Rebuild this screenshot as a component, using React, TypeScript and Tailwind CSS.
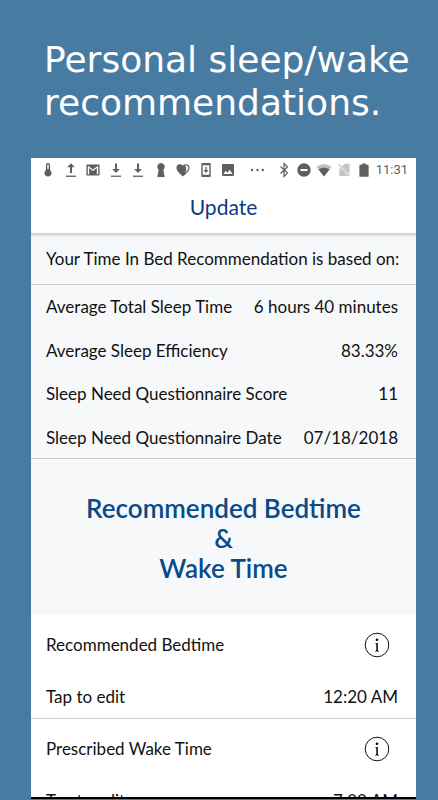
import type { ReactNode } from 'react';

interface Stat { label: string; value: string; }
interface TimeSetting { label: string; time: string; }

const stats: Stat[] = [
  { label: 'Average Total Sleep Time', value: '6 hours 40 minutes' },
  { label: 'Average Sleep Efficiency', value: '83.33%' },
  { label: 'Sleep Need Questionnaire Score', value: '11' },
  { label: 'Sleep Need Questionnaire Date', value: '07/18/2018' },
];

const settings: TimeSetting[] = [
  { label: 'Recommended Bedtime', time: '12:20 AM' },
  { label: 'Prescribed Wake Time', time: '7:00 AM' },
];

function Icon({ children }: { children: ReactNode }) {
  return (
    <svg viewBox="0 0 16 16" className="size-4 shrink-0" fill="currentColor" aria-hidden="true">
      {children}
    </svg>
  );
}

const Download = () => (
  <Icon>
    <path d="M7 1.500h2v5.500h2.800L8 11 4.200 7H7z" />
    <path d="M3 13.600h10v1.300H3z" />
  </Icon>
);

function StatusBar() {
  return (
    <div className="flex h-6 items-center justify-between bg-white pl-[9px] pr-2 text-[#5f5f5f]">
      <div className="flex w-[196px] items-center justify-between">
        {/* thermometer */}
        <Icon>
          <path d="M8 1a2.100 2.100 0 0 0-2.100 2.100v5.200a3.500 3.500 0 1 0 4.200 0V3.100A2.100 2.100 0 0 0 8 1zm-.7 2.100a.7.7 0 0 1 1.400 0v3.800H7.300z" />
        </Icon>
        {/* upload */}
        <Icon>
          <path d="M7 11V5.300H4.200L8 1.300l3.800 4H9V11z" />
          <path d="M3 13.600h10v1.300H3z" />
        </Icon>
        {/* mail */}
        <Icon>
          <path fillRule="evenodd" d="M2.400 2.500h11.200c.6 0 1 .4 1 1v9c0 .6-.4 1-1 1H2.400c-.6 0-1-.4-1-1v-9c0-.6.4-1 1-1zm1.800 9.800V6.100L8 9l3.800-2.900v6.200h1.400V4.200h-.8L8 7.400 3.600 4.200h-.8v8.100z" />
        </Icon>
        <Download />
        <Download />
        {/* keyhole */}
        <Icon>
          <path d="M8 1a3.800 3.800 0 0 0-2.300 6.800L4.300 15h7.400l-1.400-7.200A3.800 3.800 0 0 0 8 1z" />
        </Icon>
        {/* heart */}
        <Icon>
          <path fillRule="evenodd" d="M8 14.400C4.200 11.100 1.500 8.800 1.500 5.700A3.500 3.500 0 0 1 5 2.200c1.200 0 2.300.6 3 1.400.7-.8 1.800-1.400 3-1.400a3.500 3.500 0 0 1 3.500 3.500c0 3.100-2.700 5.400-6.500 8.700zm1.700-3.300c2.100-1.900 3.600-3.500 3.600-5.400A2.300 2.300 0 0 0 11 3.400c-.5 0-.9.1-1.200.3 1 .7 1.500 1.700 1.500 3 0 1.600-.6 3-1.600 4.400z" />
        </Icon>
        {/* system update */}
        <Icon>
          <path fillRule="evenodd" d="M4.400 1h7.200c.6 0 1.100.5 1.100 1.100v11.800c0 .6-.5 1.100-1.100 1.100H4.400c-.6 0-1.100-.5-1.100-1.100V2.100C3.300 1.500 3.800 1 4.400 1zM4.700 3.200v9.600h6.600V3.200zM7.300 5h1.400v3h1.900L8 10.900 5.400 8h1.900z" />
        </Icon>
        {/* picture */}
        <Icon>
          <path fillRule="evenodd" d="M3.200 2h9.600c.7 0 1.200.5 1.200 1.200v9.600c0 .7-.5 1.200-1.200 1.200H3.200c-.7 0-1.200-.5-1.200-1.200V3.200C2 2.500 2.500 2 3.200 2zm.3 9.900h9L9.600 7.700l-2.300 3-1.600-1.900z" />
        </Icon>
      </div>
      <Icon>
        <circle cx="4" cy="8" r="1.200" />
        <circle cx="9.500" cy="8" r="1.200" />
        <circle cx="14.800" cy="8" r="1.200" />
      </Icon>
      <div className="flex items-center gap-1">
        {/* bluetooth */}
        <Icon>
          <path d="M4.500 4.500 11.500 11 8 14.500v-13L11.500 5l-7 6.500" fill="none" stroke="currentColor" strokeWidth="1.200" />
        </Icon>
        {/* do not disturb */}
        <Icon>
          <path fillRule="evenodd" d="M8 1.300a6.700 6.700 0 1 1 0 13.400A6.700 6.700 0 0 1 8 1.300zM4.500 7.100v1.800h7V7.100z" />
        </Icon>
        {/* wifi */}
        <Icon>
          <path d="M8 14.500.5 5C4.500 1.200 11.500 1.200 15.500 5z" opacity=".4" />
          <path d="M8 14.500 2.500 7.500c3-2.500 8-2.500 11 0z" />
        </Icon>
        {/* no sim */}
        <Icon>
          <g className="text-[#c4c4c4]">
            <path d="M13.500 1.800v10.400L5.900 4.600 8.700 1.800zM4.300 5.800 12.500 14H3.400V6.500z" fill="currentColor" />
            <path d="m2.500 2 11.500 12.300" fill="none" stroke="currentColor" strokeWidth="1.200" />
          </g>
        </Icon>
        {/* battery */}
        <Icon>
          <path d="M6.200 1.500h3.600v1.300h2.400c.2 0 .4.200.4.400v11c0 .3-.2.500-.5.500H3.900c-.3 0-.5-.2-.5-.5v-11c0-.2.200-.4.400-.4h2.400z" />
        </Icon>
        <span className="font-['Roboto',sans-serif] text-[13px] leading-4">11:31</span>
      </div>
    </div>
  );
}

function InfoButton({ label }: { label: string }) {
  return (
    <button aria-label={`About ${label}`} className="mr-2 shrink-0">
      <svg viewBox="0 0 26 26" className="size-[26px]" aria-hidden="true">
        <circle cx="13" cy="13" r="11.800" fill="none" stroke="currentColor" strokeWidth="1" />
        <circle cx="13" cy="7.800" r="1.300" />
        <path d="M11.200 10.900h2.600v7.400c0 .5.400.7 1.200.8v.5h-4v-.5c.9-.1 1.300-.3 1.300-.8v-6c0-.5-.3-.8-1.100-.9z" />
      </svg>
    </button>
  );
}

function SettingRows({ label, time }: TimeSetting) {
  return (
    <div className="border-b border-[#cdced0]">
      <div className="flex h-[59px] items-center justify-between pl-[15px] pr-[18px]">
        <span>{label}</span>
        <InfoButton label={label} />
      </div>
      <div className="ml-5 border-t border-[#fafafb]" />
      <button className="flex h-[43px] w-full items-center justify-between pl-[15px] pr-[18px]">
        <span>Tap to edit</span>
        <span>{time}</span>
      </button>
    </div>
  );
}

export default function App() {
  return (
    <div className="flex h-screen flex-col overflow-hidden bg-[#487ba2] pb-px">
      <h1 className="pb-[34px] pl-11 pr-4 pt-[38px] font-['DejaVu_Sans',Verdana,sans-serif] text-[36px] leading-[43px] text-white">
        Personal sleep/wake recommendations.
      </h1>

      <main className="ml-[31px] mr-[22px] min-h-0 flex-1 overflow-hidden border-b-2 border-black bg-white font-['Lato',sans-serif] text-[17px] text-[#111]">
        <StatusBar />
        <header className="flex h-[52px] items-center justify-center pb-0.5 text-[21px] text-[#0b3b85]">
          <h2>Update</h2>
        </header>

        <section className="bg-[#f7f8fa] shadow-[0_-1px_0_#cfd0d2,inset_0_3px_3px_-2px_rgba(0,0,0,0.2)]">
          <p className="flex h-[51px] items-center whitespace-nowrap border-b border-[#c8cacd] pl-[15px]">
            Your Time In Bed Recommendation is based on:
          </p>
          <dl className="flex min-h-[174px] flex-col justify-between border-b border-[#c8cacd] pb-2 pt-[10px] leading-6">
            {stats.map((s) => (
              <div key={s.label} className="flex justify-between whitespace-nowrap pl-[15px] pr-[18px]">
                <dt>{s.label}</dt>
                <dd>{s.value}</dd>
              </div>
            ))}
          </dl>
          <h3 className="pb-8 pt-[34px] text-center text-[26px] font-semibold leading-[30px] text-[#084b88]">
            Recommended Bedtime
            <br />
            &amp;
            <br />
            Wake Time
          </h3>
        </section>

        {settings.map((s) => (
          <SettingRows key={s.label} {...s} />
        ))}
      </main>
    </div>
  );
}
